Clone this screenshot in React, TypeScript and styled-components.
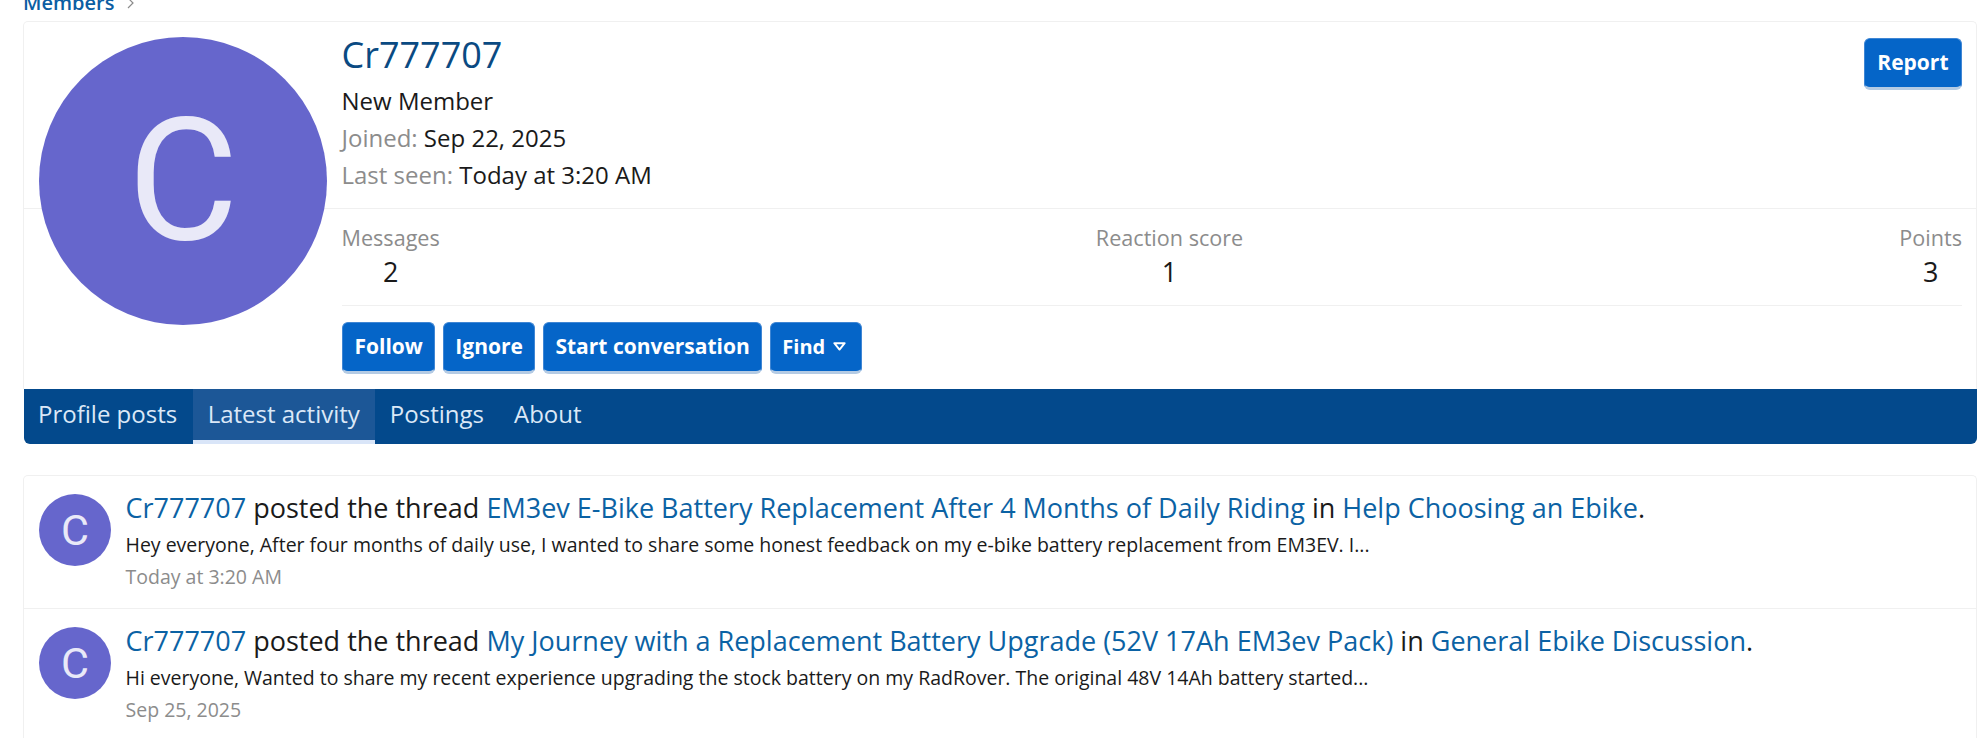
import React from "react";
import styled, { createGlobalStyle } from "styled-components";

const Global = createGlobalStyle`
  html, body { margin: 0; padding: 0; background: #fff; height: 738px; overflow: hidden; }
  body { font-family: "Open Sans", "Noto Sans", sans-serif; color: #1a1a1a; }
  a { text-decoration: none; }
`;

const Page = styled.div`
  padding: 0 10px 0 23px;
  margin-top: -16px;
`;
const Crumb = styled.div`
  display: flex;
  align-items: center;
  gap: 13px;
  height: 37px;
  font-size: 20px;
  font-weight: 600;
  color: #0b5ea3;
`;
const Card = styled.div`
  border: 1px solid #f0f0f0;
  border-radius: 5px;
  background: #fff;
`;
const ProfileCard = styled(Card)`
  position: relative;
  border-radius: 5px 5px 0 0;
  border-bottom: 0;
`;
const BigAvatar = styled.div`
  position: absolute;
  left: 15px;
  top: 15px;
  width: 288px;
  height: 288px;
  border-radius: 50%;
  background: #6666cc;
  color: #e9e9f8;
  font-family: Roboto, sans-serif;
  font-size: 170px;
  line-height: 288px;
  text-align: center;
`;
const Header = styled.div`
  display: flex;
  justify-content: space-between;
  align-items: flex-start;
  height: 187px;
  padding: 12px 14px 0 317.5px;
  border-bottom: 1px solid #f0f0f0;
  box-sizing: border-box;
`;
const Name = styled.h1`
  margin: 0 0 7px;
  font-size: 36px;
  font-weight: 400;
  line-height: 41px;
  color: #0a4a82;
`;
const InfoLine = styled.div`
  font-size: 24px;
  line-height: 37px;
`;
const Muted = styled.span`
  color: #8c8c8c;
`;
const Stats = styled.div`
  margin: 0 14px 0 317.5px;
  height: 97px;
  display: flex;
  justify-content: space-between;
  border-bottom: 1px solid #f0f0f0;
  padding-top: 14px;
  box-sizing: border-box;
`;
const Stat = styled.div`
  text-align: center;
`;
const StatLabel = styled.div`
  font-size: 21.6px;
  line-height: 30px;
  color: #8c8c8c;
`;
const StatValue = styled.div`
  font-size: 27px;
  line-height: 37px;
`;
const Buttons = styled.div`
  display: flex;
  gap: 7.5px;
  padding: 16px 14px 15px 318px;
`;
const Button = styled.a`
  display: inline-flex;
  align-items: center;
  height: 52px;
  padding: 0 11.5px 2px;
  box-sizing: border-box;
  background: #0565c8;
  border: 1px solid #3f86d4;
  border-bottom: 3px solid #b4cbe4;
  border-radius: 6px;
  color: #fff;
  font-size: 21px;
  font-weight: 700;
`;
const ReportButton = styled(Button)`
  margin-top: 4px;
  padding: 0 12.5px 3px;
`;
const FindButton = styled(Button)`
  gap: 8px;
  padding-right: 15px;
  font-size: 20px;
`;
const Tabs = styled.nav`
  display: flex;
  height: 55px;
  margin-left: 1px;
  background: #03498c;
  border-radius: 0 0 6px 6px;
  overflow: hidden;
`;
const Tab = styled.a<{ $active?: boolean }>`
  padding: 0 15px;
  font-size: 24px;
  line-height: 49px;
  color: #dbe8f7;
  background: ${(p) => (p.$active ? "#1c5797" : "transparent")};
  border-bottom: 4px solid ${(p) => (p.$active ? "#d9e5f8" : "transparent")};
  &:first-child {
    padding: 0 15.5px 0 14px;
  }
`;
const Feed = styled(Card)`
  margin-top: 31px;
  border-bottom: 0;
  border-radius: 5px 5px 0 0;
`;
const Row = styled.div`
  display: flex;
  gap: 14.5px;
  height: 114px;
  padding: 18px 15px 0;
  & + & {
    border-top: 1px solid #f0f0f0;
  }
`;
const Avatar = styled.div`
  flex: none;
  width: 72px;
  height: 72px;
  border-radius: 50%;
  background: #6666cc;
  color: #e9e9f8;
  font-family: Roboto, sans-serif;
  font-size: 43px;
  line-height: 72px;
  text-align: center;
`;
const Body = styled.div`
  margin-top: -3px;
`;
const Title = styled.div`
  font-size: 27px;
  line-height: 33px;
`;
const Link = styled.a`
  color: #0b62a4;
`;
const Snippet = styled.div`
  margin-top: 4px;
  font-size: 19.5px;
  line-height: 34px;
`;
const Time = styled.div`
  font-size: 19.5px;
  line-height: 29px;
  color: #8c8c8c;
`;

const items = [
  {
    thread: "EM3ev E-Bike Battery Replacement After 4 Months of Daily Riding",
    forum: "Help Choosing an Ebike",
    text: "Hey everyone, After four months of daily use, I wanted to share some honest feedback on my e-bike battery replacement from EM3EV. I...",
    time: "Today at 3:20 AM",
  },
  {
    thread: "My Journey with a Replacement Battery Upgrade (52V 17Ah EM3ev Pack)",
    forum: "General Ebike Discussion",
    text: "Hi everyone, Wanted to share my recent experience upgrading the stock battery on my RadRover. The original 48V 14Ah battery started...",
    time: "Sep 25, 2025",
  },
];

export default function App() {
  return (
    <Page>
      <Global />
      <Crumb>
        Members
        <svg width="7" height="12" viewBox="0 0 7 12" fill="none">
          <path d="M1 1l5 5-5 5" stroke="#8c8c8c" strokeWidth="1.2" />
        </svg>
      </Crumb>
      <ProfileCard>
        <BigAvatar>C</BigAvatar>
        <Header>
          <div>
            <Name>Cr777707</Name>
            <InfoLine>New Member</InfoLine>
            <InfoLine>
              <Muted>Joined:</Muted> Sep 22, 2025
            </InfoLine>
            <InfoLine>
              <Muted>Last seen:</Muted> Today at 3:20 AM
            </InfoLine>
          </div>
          <ReportButton>Report</ReportButton>
        </Header>
        <Stats>
          <Stat>
            <StatLabel>Messages</StatLabel>
            <StatValue>2</StatValue>
          </Stat>
          <Stat>
            <StatLabel>Reaction score</StatLabel>
            <StatValue>1</StatValue>
          </Stat>
          <Stat>
            <StatLabel>Points</StatLabel>
            <StatValue>3</StatValue>
          </Stat>
        </Stats>
        <Buttons>
          <Button>Follow</Button>
          <Button>Ignore</Button>
          <Button>Start conversation</Button>
          <FindButton>
            Find
            <svg width="13" height="9" viewBox="0 0 13 9" fill="none">
              <path d="M1.3 1.2h10.4L6.5 7.6z" stroke="#fff" strokeWidth="1.9" strokeLinejoin="round" />
            </svg>
          </FindButton>
        </Buttons>
      </ProfileCard>
      <Tabs>
        <Tab>Profile posts</Tab>
        <Tab $active>Latest activity</Tab>
        <Tab>Postings</Tab>
        <Tab>About</Tab>
      </Tabs>
      <Feed>
        {items.map((it) => (
          <Row key={it.thread}>
            <Avatar>C</Avatar>
            <Body>
              <Title>
                <Link>Cr777707</Link> posted the thread <Link>{it.thread}</Link> in <Link>{it.forum}</Link>.
              </Title>
              <Snippet>{it.text}</Snippet>
              <Time>{it.time}</Time>
            </Body>
          </Row>
        ))}
      </Feed>
    </Page>
  );
}
